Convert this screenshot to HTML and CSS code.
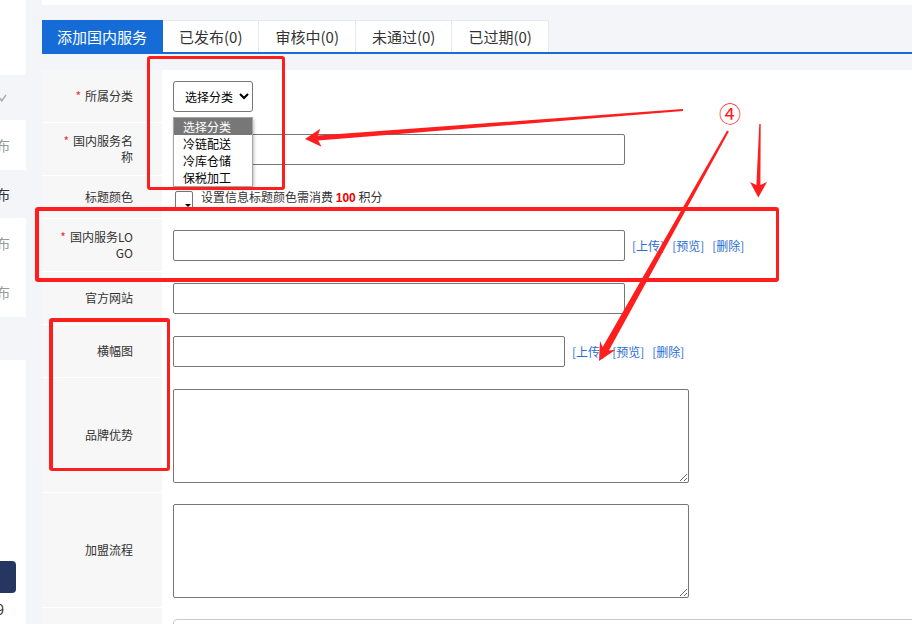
FILE: index.html
```html
<!DOCTYPE html>
<html lang="zh-CN">
<head>
    <meta charset="UTF-8">
    <meta name="viewport" content="width=device-width, initial-scale=1.0">
    <title>添加国内服务</title>
    <link rel="stylesheet" href="styles.css">
</head>
<body>
    <div class="page">
        <div class="sidebar">
            <div class="side-top"></div>
            <div class="side-item shade">
                <svg class="side-arrow" width="14" height="10" viewBox="0 0 14 10"><polyline points="1.4,1.8 5.7,8 10,1.8" fill="none" stroke="#a8a8a8" stroke-width="1.4"/></svg>
            </div>
            <div class="side-item"><span>信息发布</span></div>
            <div class="side-item shade active"><span>服务发布</span></div>
            <div class="side-item"><span>需求发布</span></div>
            <div class="side-item"><span>招聘发布</span></div>
            <div class="side-item shade short"></div>
            <div class="side-fill"></div>
            <div class="side-btn"></div>
            <div class="side-ver"><span>v1.0.9</span></div>
        </div>

        <div class="main">
            <div class="topbar"></div>
            <ul class="tabs">
                <li class="on">添加国内服务</li>
                <li>已发布(0)</li>
                <li>审核中(0)</li>
                <li>未通过(0)</li>
                <li>已过期(0)</li>
            </ul>

            <div class="form">
                <div class="row">
                    <div class="label"><span><i>*</i>所属分类</span></div>
                    <div class="field">
                        <div class="select-wrap">
                            <select class="sel">
                                <option>选择分类</option>
                                <option>冷链配送</option>
                                <option>冷库仓储</option>
                                <option>保税加工</option>
                            </select>
                            <ul class="options">
                                <li class="hover">选择分类</li>
                                <li>冷链配送</li>
                                <li>冷库仓储</li>
                                <li>保税加工</li>
                            </ul>
                        </div>
                    </div>
                </div>
                <div class="row">
                    <div class="label"><span><i>*</i>国内服务名称</span></div>
                    <div class="field"><input type="text" class="ipt"></div>
                </div>
                <div class="row">
                    <div class="label"><span>标题颜色</span></div>
                    <div class="field">
                        <span class="color-box"><b></b></span>
                        <span class="tip">设置信息标题颜色需消费 <em>100</em> 积分</span>
                    </div>
                </div>
                <div class="row">
                    <div class="label"><span><i>*</i>国内服务LOGO</span></div>
                    <div class="field">
                        <input type="text" class="ipt">
                        <span class="ops"><a href="#">[上传]</a><a href="#">[预览]</a><a href="#">[删除]</a></span>
                    </div>
                </div>
                <div class="row">
                    <div class="label"><span>官方网站</span></div>
                    <div class="field"><input type="text" class="ipt"></div>
                </div>
                <div class="row">
                    <div class="label"><span>横幅图</span></div>
                    <div class="field">
                        <input type="text" class="ipt short">
                        <span class="ops"><a href="#">[上传]</a><a href="#">[预览]</a><a href="#">[删除]</a></span>
                    </div>
                </div>
                <div class="row">
                    <div class="label"><span>品牌优势</span></div>
                    <div class="field"><textarea class="txt"></textarea></div>
                </div>
                <div class="row">
                    <div class="label"><span>加盟流程</span></div>
                    <div class="field"><textarea class="txt"></textarea></div>
                </div>
                <div class="row">
                    <div class="label"><span>详细介绍</span></div>
                    <div class="field top">
                        <div class="editor"><div class="editor-tab"></div></div>
                    </div>
                </div>
            </div>
        </div>
    </div>

    <!-- annotation layer -->
    <div class="marks">
        <div class="mark-box box1"></div>
        <div class="mark-box box2"></div>
        <div class="mark-box box3"></div>
        <span class="mark-num">④</span>
        <svg class="arrows" width="912" height="624" viewBox="0 0 912 624">
            <polygon points="682.9,109 317.8,135.5 320.3,128.8 305,139 321.6,146.8 318.2,140.5 683.1,111"/>
            <polygon points="727.1,130.5 602.7,347.1 600,340.9 599,361 615.6,349.7 608.9,350.5 728.9,131.5"/>
            <polygon points="759.3,124 756.4,185 750,182 758.3,197.5 767,182 760.4,185 760.7,124"/>
        </svg>
    </div>
</body>
</html>
```

FILE: styles.css
```css
body {
    margin: 0;
    width: 912px;
    height: 624px;
    overflow: hidden;
    position: relative;
    background: #f3f5f9;
    font-family: "Noto Sans CJK SC", "Microsoft YaHei", sans-serif;
    font-size: 12px;
    color: #333;
}

.page {
    display: flex;
    height: 624px;
}

/* left menu, cut off by the screenshot */
.sidebar {
    width: 26px;
    flex: none;
    background: #fff;
    display: flex;
    flex-direction: column;
}

.side-top {
    height: 75px;
}

.side-item {
    height: 49px;
    box-sizing: border-box;
    padding-right: 16px;
    display: flex;
    justify-content: flex-end;
    align-items: center;
    overflow: hidden;
    white-space: nowrap;
    font-size: 14px;
    color: #999;
}

.side-item:nth-child(2) {
    height: 45px;
}

.side-item:nth-child(3),
.side-item:nth-child(6) {
    height: 50px;
}

.side-item.active {
    height: 48px;
    color: #333;
}

.side-item.shade {
    background: #f3f5f9;
}

.side-item.short {
    height: 43px;
}

.side-arrow {
    flex: none;
}

.side-fill {
    flex: 1;
}

.side-btn {
    width: 16px;
    height: 32px;
    background: #253760;
    border-radius: 0 4px 4px 0;
}

.side-ver {
    height: 31px;
    box-sizing: border-box;
    padding-right: 22px;
    display: flex;
    justify-content: flex-end;
    align-items: center;
    overflow: hidden;
    white-space: nowrap;
    font-size: 14px;
    color: #333;
}

.main {
    flex: 1;
    min-width: 0;
    margin-left: 16px;
}

.topbar {
    height: 5px;
    background: #fff;
}

.tabs {
    display: flex;
    list-style: none;
    margin: 15px 0 0;
    padding: 0;
    border-bottom: 2px solid #166cd6;
}

.tabs li {
    height: 32px;
    box-sizing: border-box;
    line-height: 31px;
    padding: 0 16px;
    font-size: 15px;
    background: #fff;
    border: 1px solid #e6e9ee;
    border-width: 1px 1px 0 0;
}

.tabs li.on {
    padding: 0 15px;
    background: #166cd6;
    border-color: #166cd6;
    color: #fff;
}

.form {
    margin-top: 16px;
    background: #fff;
}

.row {
    display: flex;
    border-bottom: 1px solid #fff;
}

.label {
    width: 120px;
    flex: none;
    box-sizing: border-box;
    padding: 0 29px 0 16px;
    background: #f7f7f7;
    display: flex;
    align-items: center;
    justify-content: flex-end;
    text-align: right;
    line-height: 16px;
    word-break: break-all;
}

.label i {
    font-style: normal;
    color: #e83030;
    margin-right: 4px;
}

.field {
    flex: 1;
    display: flex;
    align-items: center;
    padding: 11px 0 10px 11px;
    min-height: 20px;
}

.field.top {
    align-items: flex-start;
}

.ipt {
    width: 452px;
    height: 31px;
    box-sizing: border-box;
    margin: 0;
    border: 1px solid #767676;
    border-radius: 2px;
    background: #fff;
}

.ipt.short {
    width: 392px;
}

.txt {
    width: 516px;
    height: 94px;
    box-sizing: border-box;
    margin: 0 0 -1px;
    border: 1px solid #767676;
    border-radius: 2px;
    display: block;
}

.ops a {
    color: #2a6dd4;
    text-decoration: none;
    margin-left: 8px;
    font-size: 12px;
}

.ops a:first-child {
    margin-left: 7px;
}

.select-wrap {
    position: relative;
}

.sel {
    width: 80px;
    height: 31px;
    margin: 0;
    padding: 0 0 0 7px;
    border: 1px solid #767676;
    border-radius: 3px;
    background: #fff;
    font-family: inherit;
    font-size: 12px;
    color: #000;
}

/* the opened option list */
.options {
    position: absolute;
    top: 36px;
    left: 0;
    width: 80px;
    box-sizing: border-box;
    margin: 0;
    padding: 0;
    list-style: none;
    background: #fff;
    border: 1px solid #a5a5a5;
    box-shadow: 1px 2px 3px rgba(0,0,0,0.25);
    z-index: 5;
}

.options li {
    height: 17px;
    line-height: 17px;
    padding-left: 9px;
    font-size: 12px;
    color: #000;
}

.options li.hover {
    background: #777;
    color: #fff;
}

.color-box {
    position: relative;
    width: 18px;
    height: 18px;
    box-sizing: border-box;
    margin: 0 0 -4px 2px;
    border: 1px solid #767676;
    border-radius: 2px;
    background: #fff;
    flex: none;
}

.color-box b {
    position: absolute;
    right: 1px;
    bottom: 1px;
    width: 0;
    height: 0;
    border: 3px solid transparent;
    border-top: 3px solid #000;
    border-bottom: 0;
}

.tip {
    margin-left: 8px;
    line-height: 20px;
}

.tip em {
    font-style: normal;
    font-weight: bold;
    font-family: "Liberation Sans", Arial, sans-serif;
    color: #ee0000;
}

.editor {
    width: 760px;
    height: 120px;
    box-sizing: border-box;
    border: 1px solid #ccc;
    border-radius: 4px;
    padding: 4px 0 0 111px;
}

.editor-tab {
    width: 74px;
    height: 22px;
    border: 1px solid #ccc;
    border-radius: 3px;
    background: #eee;
}

/* red marks drawn over the screenshot */
.marks {
    position: absolute;
    left: 0;
    top: 0;
    width: 912px;
    height: 624px;
    pointer-events: none;
    z-index: 10;
}

.mark-box {
    position: absolute;
    box-sizing: border-box;
    border: 3px solid #ff1e1e;
    border-radius: 3px;
}

.box1 {
    left: 147px;
    top: 56px;
    width: 138px;
    height: 134px;
}

.box2 {
    left: 35px;
    top: 207px;
    width: 744px;
    height: 75px;
    border-width: 4px 3px 4px 4px;
}

.box3 {
    left: 49px;
    top: 318px;
    width: 121px;
    height: 153px;
    border-width: 4px 3px 3px 4px;
}

.mark-num {
    position: absolute;
    left: 719px;
    top: 100px;
    font-size: 22px;
    line-height: 24px;
    color: #ff1e1e;
}

.arrows {
    position: absolute;
    left: 0;
    top: 0;
}

.arrows polygon {
    fill: #ff1e1e;
}
```
